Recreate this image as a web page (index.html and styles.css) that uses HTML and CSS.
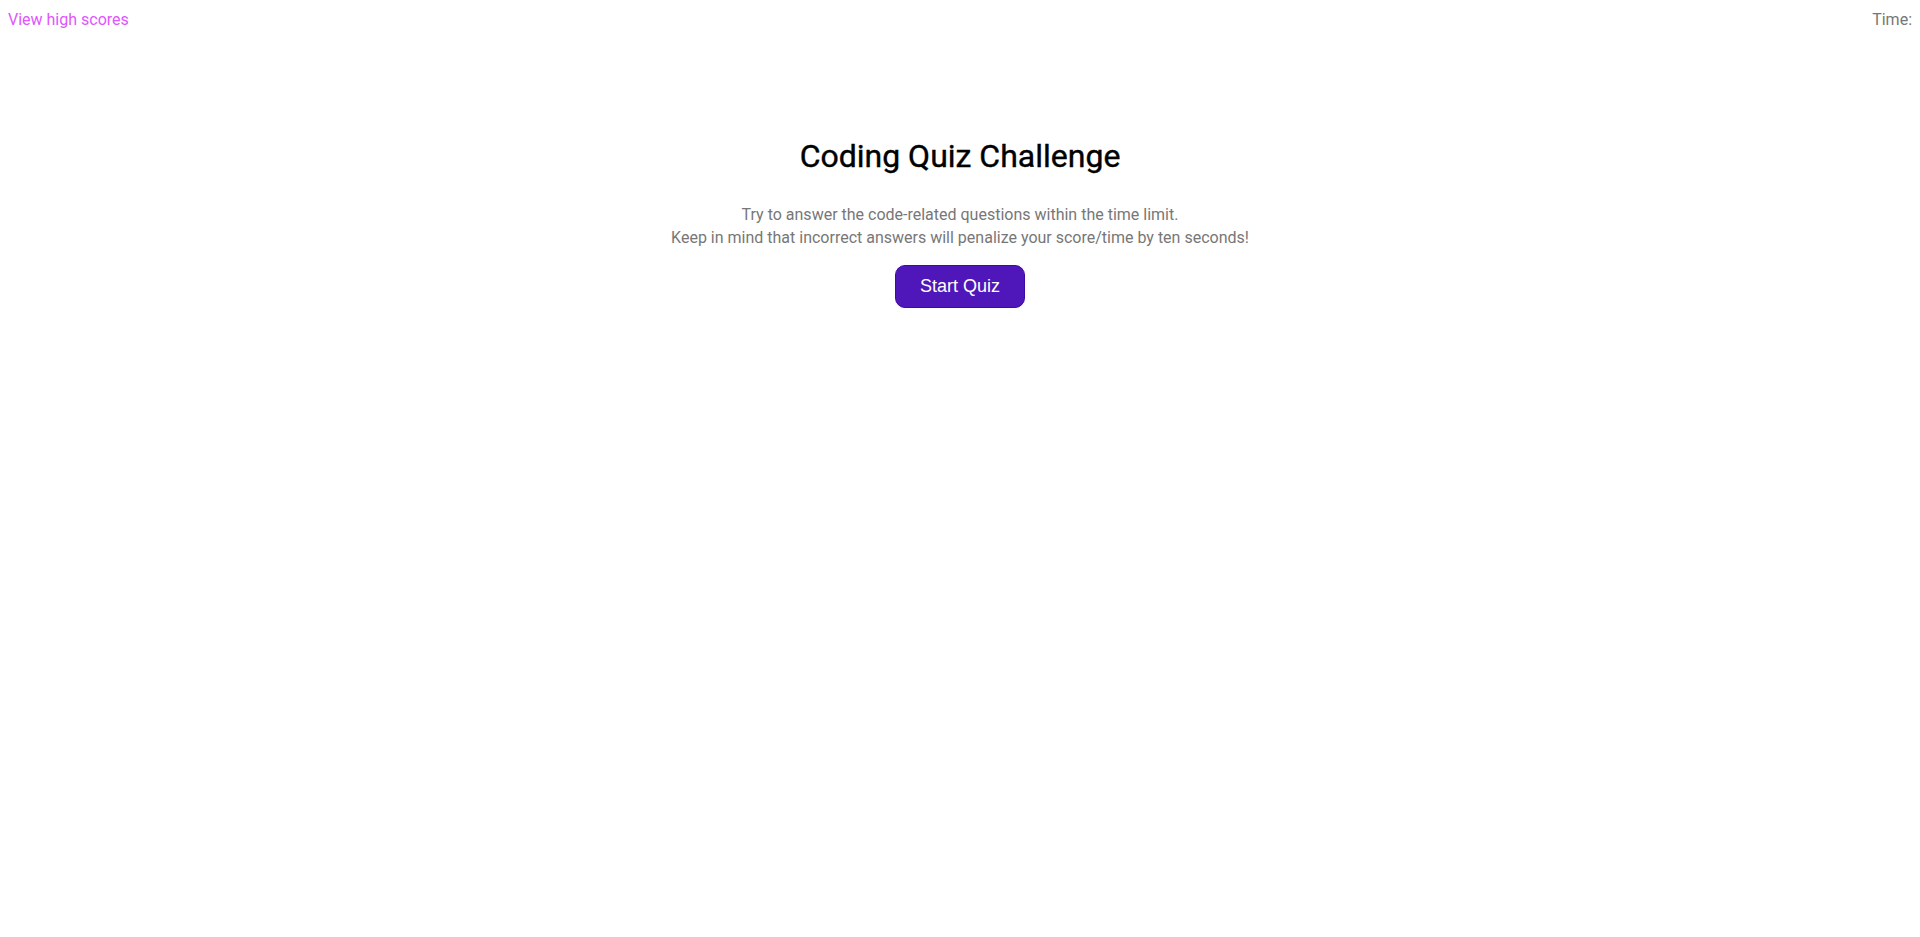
FILE: index.html
```html
<!DOCTYPE html>
<html lang="en">
<head>
<meta charset="utf-8">
<title>Coding Quiz Challenge</title>
<link rel="stylesheet" href="styles.css">
</head>
<body>
<header class="top-bar">
  <a class="scores-link" href="#">View high scores</a>
  <div class="timer">Time: <span class="timer-value"></span></div>
</header>
<main class="intro">
  <h1 class="intro-title">Coding Quiz Challenge</h1>
  <p class="intro-text">Try to answer the code-related questions within the time limit.<br>Keep in mind that incorrect answers will penalize your score/time by ten seconds!</p>
  <button class="start-btn" type="button">Start Quiz</button>
</main>
</body>
</html>
```

FILE: styles.css
```css
html, body {
  margin: 0;
  padding: 0;
  background: #ffffff;
}
body {
  font-family: Roboto, "Liberation Sans", Arial, sans-serif;
  font-size: 16px;
}
.top-bar {
  display: flex;
  justify-content: space-between;
  align-items: center;
  padding: 10px 8px 0 8px;
}
.scores-link {
  color: #e056fd;
  text-decoration: none;
  font-size: 16px;
}
.timer {
  color: #777777;
  font-size: 16px;
}
.intro {
  display: flex;
  flex-direction: column;
  align-items: center;
  text-align: center;
  padding-top: 108px;
}
.intro-title {
  margin: 0;
  font-size: 32px;
  font-weight: 400;
  -webkit-text-stroke: 0.4px #000000;
  color: #000000;
}
.intro-text {
  margin: 28px 0 16px 0;
  color: #777777;
  font-size: 16px;
  line-height: 23px;
}
.start-btn {
  font-family: "Liberation Sans", Arial, sans-serif;
  font-size: 18px;
  color: #ffffff;
  background: #4f16b9;
  border: 1px solid #3e0aa6;
  border-radius: 10px;
  padding: 10px 24px;
  cursor: pointer;
}
```
